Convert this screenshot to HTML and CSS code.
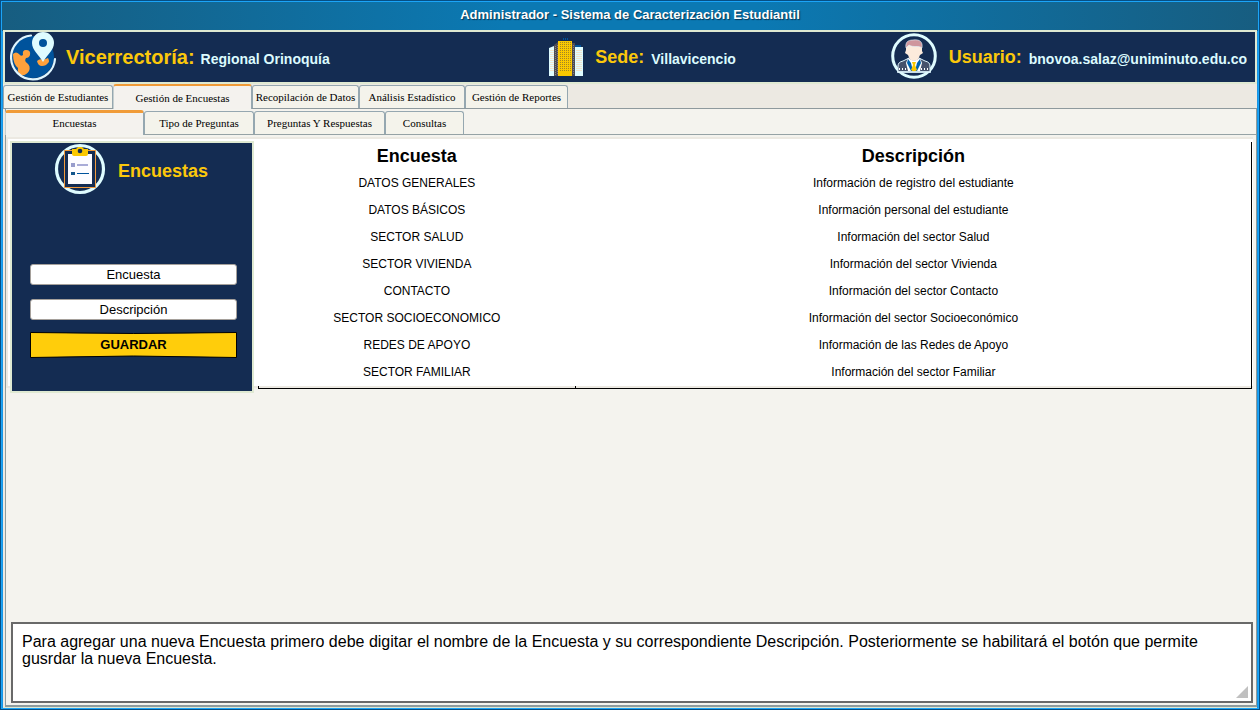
FILE: index.html
```html
<!DOCTYPE html>
<html lang="es">
<head>
<meta charset="utf-8">
<title>Administrador - Sistema de Caracterización Estudiantil</title>
<link rel="stylesheet" href="styles.css">
</head>
<body>
<div class="window">
  <h1 class="titlebar">Administrador - Sistema de Caracterización Estudiantil</h1>
  <div class="frame">
    <header class="header">
      <div class="info">
        <svg class="icon-place" width="48" height="50" viewBox="0 0 48 50" aria-hidden="true">
          <circle cx="23" cy="26" r="21" fill="#00539c"/>
          <path d="M3 23q3-3 6 0 2 3 4 1-1-5 3-5 5 0 4 5-1 3-4 3-2 3 1 5 4 3 2 8-3 5-8 4-4-2-3-7-5-4-5-14z" fill="#ffa13b"/>
          <path d="M27 30q3-3 6-1l5-2q2 4 0 5-2 3-6 3-4 0-5-5z" fill="#ffa13b"/>
          <path d="M21 4.500A22 22 0 1 0 45 28" fill="none" stroke="#dff6ff" stroke-width="2.200" stroke-linecap="round"/>
          <path d="M33 31C29 24 22 19 22 12a11 11 0 0 1 22 0c0 7-7 12-11 19z" fill="#dffcff"/>
          <circle cx="33" cy="12" r="4" fill="#00539c"/>
        </svg>
        <span class="key key-large">Vicerrectoría:</span>
        <span class="value">Regional Orinoquía</span>
      </div>
      <div class="info">
        <svg class="icon-building" width="36" height="40" viewBox="0 0 36 40" aria-hidden="true">
          <path d="M15.500 1v2M17.500 1v2M19.500 1v2" stroke="#00539c"/>
          <path d="M1 11l5-2v30H1zM26 10h9v29h-9z" fill="#dffcff"/>
          <path d="M27 8h6v2h-6z" fill="#00539c"/>
          <path d="M6 8l4-3v34H6z" fill="#4c4c55"/>
          <path d="M24 6h3v33h-3z" fill="#4c4c55"/>
          <path d="M2 13.500h4M2 15.500h4M2 17.500h4M2 19.500h4M2 21.500h4M2 23.500h4M2 25.500h4M2 27.500h4M2 29.500h4M2 31.500h4M2 33.500h4M28 13.500h6M28 15.500h6M28 17.500h6M28 19.500h6M28 21.500h6M28 23.500h6M28 25.500h6M28 27.500h6M28 29.500h6M28 31.500h6M28 33.500h6" stroke="#f3e3cc"/>
          <path d="M7.500 9v29M9.500 8v30M25.500 8v30" stroke="#8b817c" stroke-dasharray="1 1"/>
          <path d="M10 4h14v35H10z" fill="#fbc800"/>
          <path d="M12.500 5v29M14.500 5v29M16.500 5v29M18.500 5v29M20.500 5v29M22.500 5v29" stroke="#a08526" stroke-dasharray="1 1"/>
        </svg>
        <span class="key">Sede:</span>
        <span class="value">Villavicencio</span>
      </div>
      <div class="info">
        <svg class="icon-user" width="48" height="48" viewBox="0 0 48 48" aria-hidden="true">
          <circle cx="24" cy="24" r="21.300" fill="#142c52" stroke="#dffcff" stroke-width="3"/>
          <path d="M8 40v-6q0-4 5-5l6-3h10l6 3q5 1 5 5v6z" fill="#45516c" stroke="#dff6ff"/>
          <path d="M18 26l6 3 6-3 2 5-2 8H18l-2-8z" fill="#fff"/>
          <path d="M18 27l-1 4 4 8h2l-2-8zM30 27l1 4-4 8h-2l2-8z" fill="#0063b0"/>
          <path d="M22 30h4l-1 3 2 5-3 2-3-2 2-5z" fill="#fbc800"/>
          <path d="M16 14q8-4 16 0v5l1 2-3 2q-2 6-6 6t-6-6l-3-2 1-3z" fill="#fcebdc"/>
          <path d="M16 16c-1-6 2-8 7-8 7-1 10 2 9 8-3-3-9 0-13-3z" fill="#cf969d" stroke="#dff6ff" stroke-width=".6"/>
          <path d="M7 40h34" stroke="#dff6ff" stroke-width="1.500"/>
          <path d="M9 37h8M31 37h8" stroke="#fff" stroke-width="2" stroke-dasharray="1 2"/>
        </svg>
        <span class="key">Usuario:</span>
        <span class="value">bnovoa.salaz@uniminuto.edu.co</span>
      </div>
    </header>
    <nav class="tabs tabs-main" aria-label="Módulos">
      <button class="tab w-110">Gestión de Estudiantes</button>
      <button class="tab w-139 active">Gestión de Encuestas</button>
      <button class="tab w-107">Recopilación de Datos</button>
      <button class="tab w-106">Análisis Estadístico</button>
      <button class="tab w-103">Gestión de Reportes</button>
    </nav>
    <div class="panel">
      <nav class="tabs tabs-sub" aria-label="Secciones">
        <button class="tab w-139 active">Encuestas</button>
        <button class="tab w-110">Tipo de Preguntas</button>
        <button class="tab w-131">Preguntas Y Respuestas</button>
        <button class="tab w-79">Consultas</button>
      </nav>
      <main class="content">
        <div class="workspace">
          <form class="form">
            <div class="form-head">
              <svg width="52" height="52" viewBox="0 0 52 52" aria-hidden="true">
                <circle cx="26" cy="26" r="23.500" fill="#142c52" stroke="#dffcff" stroke-width="3.200"/>
                <path d="M10.500 7.500h31v37h-31z" fill="#142c52" stroke="#f29a3d"/>
                <path d="M14 11h24v30H14z" fill="#fdfcff"/>
                <path d="M18 6h4l2-2h4l2 2h4v5q0 2-2 2H20q-2 0-2-2z" fill="#fbc800"/>
                <circle cx="26" cy="8" r="2.300" fill="#142c52"/>
                <path d="M17 20h4v4h-4z" fill="#989ccc"/>
                <path d="M23 22h11" stroke="#a9abd7" stroke-width="2"/>
                <path d="M17 29h4v3h-4z" fill="#14558c"/>
                <path d="M23 30.500h12" stroke="#00539c"/>
              </svg>
              <h2 class="form-title">Encuestas</h2>
            </div>
            <input class="field" type="text" value="Encuesta" aria-label="Encuesta">
            <input class="field" type="text" value="Descripción" aria-label="Descripción">
            <button class="save" type="button">
              <svg class="save-shape" viewBox="0 0 207 26" preserveAspectRatio="none" aria-hidden="true">
                <path d="M.5.500Q103 2.500 206.500.500V25.500Q103 22.500 .5 25.500Z" fill="#ffcd0b" stroke="#000"/>
              </svg>
              <span class="save-label">GUARDAR</span>
            </button>
          </form>
          <table class="table">
            <thead><tr><th class="col-name">Encuesta</th><th>Descripción</th></tr></thead>
            <tbody>
              <tr><td>DATOS GENERALES</td><td>Información de registro del estudiante</td></tr>
              <tr><td>DATOS BÁSICOS</td><td>Información personal del estudiante</td></tr>
              <tr><td>SECTOR SALUD</td><td>Información del sector Salud</td></tr>
              <tr><td>SECTOR VIVIENDA</td><td>Información del sector Vivienda</td></tr>
              <tr><td>CONTACTO</td><td>Información del sector Contacto</td></tr>
              <tr><td>SECTOR SOCIOECONOMICO</td><td>Información del sector Socioeconómico</td></tr>
              <tr><td>REDES DE APOYO</td><td>Información de las Redes de Apoyo</td></tr>
              <tr><td>SECTOR FAMILIAR</td><td>Información del sector Familiar</td></tr>
            </tbody>
          </table>
        </div>
        <div class="help">
          <textarea class="help-text" aria-label="Ayuda" readonly>Para agregar una nueva Encuesta primero debe digitar el nombre de la Encuesta y su correspondiente Descripción. Posteriormente se habilitará el botón que permite gusrdar la nueva Encuesta.</textarea>
          <span class="grip"></span>
        </div>
      </main>
    </div>
  </div>
</div>
</body>
</html>
```
FILE: styles.css
```css
* { box-sizing: border-box; }

body {
  margin: 0;
  font-family: "Liberation Sans", Arial, sans-serif;
  color: #000;
}

.window {
  min-height: 100vh;
  display: flex;
  flex-direction: column;
  padding: 0 1px 1px;
  border: 1px solid #064f84;
  box-shadow: inset 0 0 0 1px #1ba4f8;
  background: linear-gradient(90deg, #175d80 0, #0b79b3 40%, #0b79b3 60%, #175d80 100%) 0 0 / 100% 30px no-repeat #1795e4;
}

.titlebar {
  margin: 0;
  height: 29px;
  padding-top: 6px;
  font-size: 13px;
  line-height: 16px;
  text-align: center;
  color: #fff;
  text-shadow: 1px 1px 1px #083453;
}

.frame {
  flex: 1;
  display: flex;
  flex-direction: column;
  margin: 0 1px;
  border-bottom: 1px solid #dfe9d2;
  background: #ece9e2;
}

.header {
  display: grid;
  grid-template-columns: 539fr 342fr auto;
  height: 54px;
  padding: 0 8px 0 5px;
  border: 2px solid #dfe9d2;
  background: #142c52;
}

.info {
  display: flex;
  align-items: center;
  white-space: nowrap;
}

.icon-place { margin: -3px 8px 0 0; }
.icon-building { margin-right: 11px; }
.icon-user { margin: -3px 11px 0 0; }

.key {
  padding-top: 1px;
  margin-right: 7px;
  font-size: 18px;
  font-weight: bold;
  color: #fbc80b;
}

.key-large {
  margin-right: 6px;
  font-size: 20px;
}

.value {
  padding-top: 3px;
  font-size: 14px;
  font-weight: bold;
  color: #dcfbff;
}

.tabs { display: flex; align-items: flex-end; }

.tabs-main { height: 25px; border-bottom: 1px solid #8e999d; }
.tabs-sub { height: 26px; margin-left: -1px; border-bottom: 1px solid #95a2a5; }

.tab {
  height: 23px;
  padding: 0;
  border: 1px solid #95a7b0;
  border-bottom: 0;
  border-radius: 3px 3px 0 0;
  background: #f4f3eb;
  font-family: "Liberation Serif", "Times New Roman", serif;
  font-size: 11px;
  line-height: 14px;
  text-align: center;
  white-space: nowrap;
  color: #000;
}

.tab.active {
  height: 25px;
  margin-bottom: -1px;
  border-top: 2px solid #f09b38;
  border-left-color: #c5cfcf;
  background: #f4f2ee;
}

.tabs-sub .tab.active { border-top-width: 3px; padding-bottom: 2px; }

.w-79 { width: 79px; }
.w-103 { width: 103px; }
.w-106 { width: 106px; }
.w-107 { width: 107px; }
.w-110 { width: 110px; }
.w-131 { width: 131px; }
.w-139 { width: 139px; }

.panel {
  flex: 1;
  display: flex;
  flex-direction: column;
  margin-left: 2px;
  border: solid #8e9b9d;
  border-width: 0 1px 2px;
  background: #f4f3ee;
}

.content {
  flex: 1;
  display: flex;
  flex-direction: column;
  justify-content: space-between;
  padding: 2px 3px 2px 0;
}

.workspace {
  display: flex;
  align-items: flex-start;
  height: 251px;
  padding: 3px 1px 0 2px;
  border: 2px solid #ece9e2;
  border-right: 0;
  background: #fff;
}

.form {
  display: flex;
  flex-direction: column;
  width: 244px;
  height: 252px;
  margin-top: -1px;
  padding: 0 15px 0 18px;
  border: 2px solid #dfe9d2;
  background: #142c52;
}

.form-head {
  display: flex;
  align-items: center;
  height: 52px;
  margin-bottom: 69px;
  padding-left: 24px;
}

.form-title {
  margin: 4px 0 0 12px;
  font-size: 18px;
  line-height: 20px;
  color: #fbc80b;
}

.field {
  width: 100%;
  height: 21px;
  margin-bottom: 14px;
  padding: 0;
  border: 1px solid #a5a09b;
  border-radius: 3px;
  background: #fff;
  font: 13px "Liberation Sans", Arial, sans-serif;
  text-align: center;
}

.save {
  position: relative;
  height: 26px;
  margin-top: -2px;
  padding: 0 0 2px;
  border: 0;
  background: none;
  color: #000;
  font: bold 13px "Liberation Sans", Arial, sans-serif;
}

.save-shape {
  position: absolute;
  inset: 0;
  width: 100%;
  height: 100%;
}

.save-label { position: relative; }

.table {
  flex: 1;
  width: 0;
  margin-left: 4px;
  padding-bottom: 3px;
  border: solid #000;
  border-width: 0 1px 1px 0;
  border-spacing: 0;
  table-layout: fixed;
  background:
    linear-gradient(#000, #000) 0 100% / 1px 2px no-repeat,
    linear-gradient(#000, #000) 32% 100% / 1px 2px no-repeat,
    linear-gradient(#ece9e2, #ece9e2) 0 100% / 100% 2px no-repeat,
    #fff;
}

.table th, .table td {
  height: 27px;
  padding: 0;
  text-align: center;
  font-size: 12px;
  line-height: 14px;
}

.table th { font-size: 18px; line-height: 20px; }
.col-name { width: 32%; }

.help { position: relative; display: flex; padding-left: 5px; }

.help-text {
  flex: 1;
  height: 81px;
  padding: 9px;
  border: 2px solid #696969;
  background: #fff;
  color: #000;
  font: 16px/17px "Liberation Sans", Arial, sans-serif;
  resize: none;
}

.grip {
  position: absolute;
  right: 5px;
  bottom: 5px;
  width: 12px;
  height: 12px;
  background: #c0c0c0;
  clip-path: polygon(100% 0, 100% 100%, 0 100%);
}
```
